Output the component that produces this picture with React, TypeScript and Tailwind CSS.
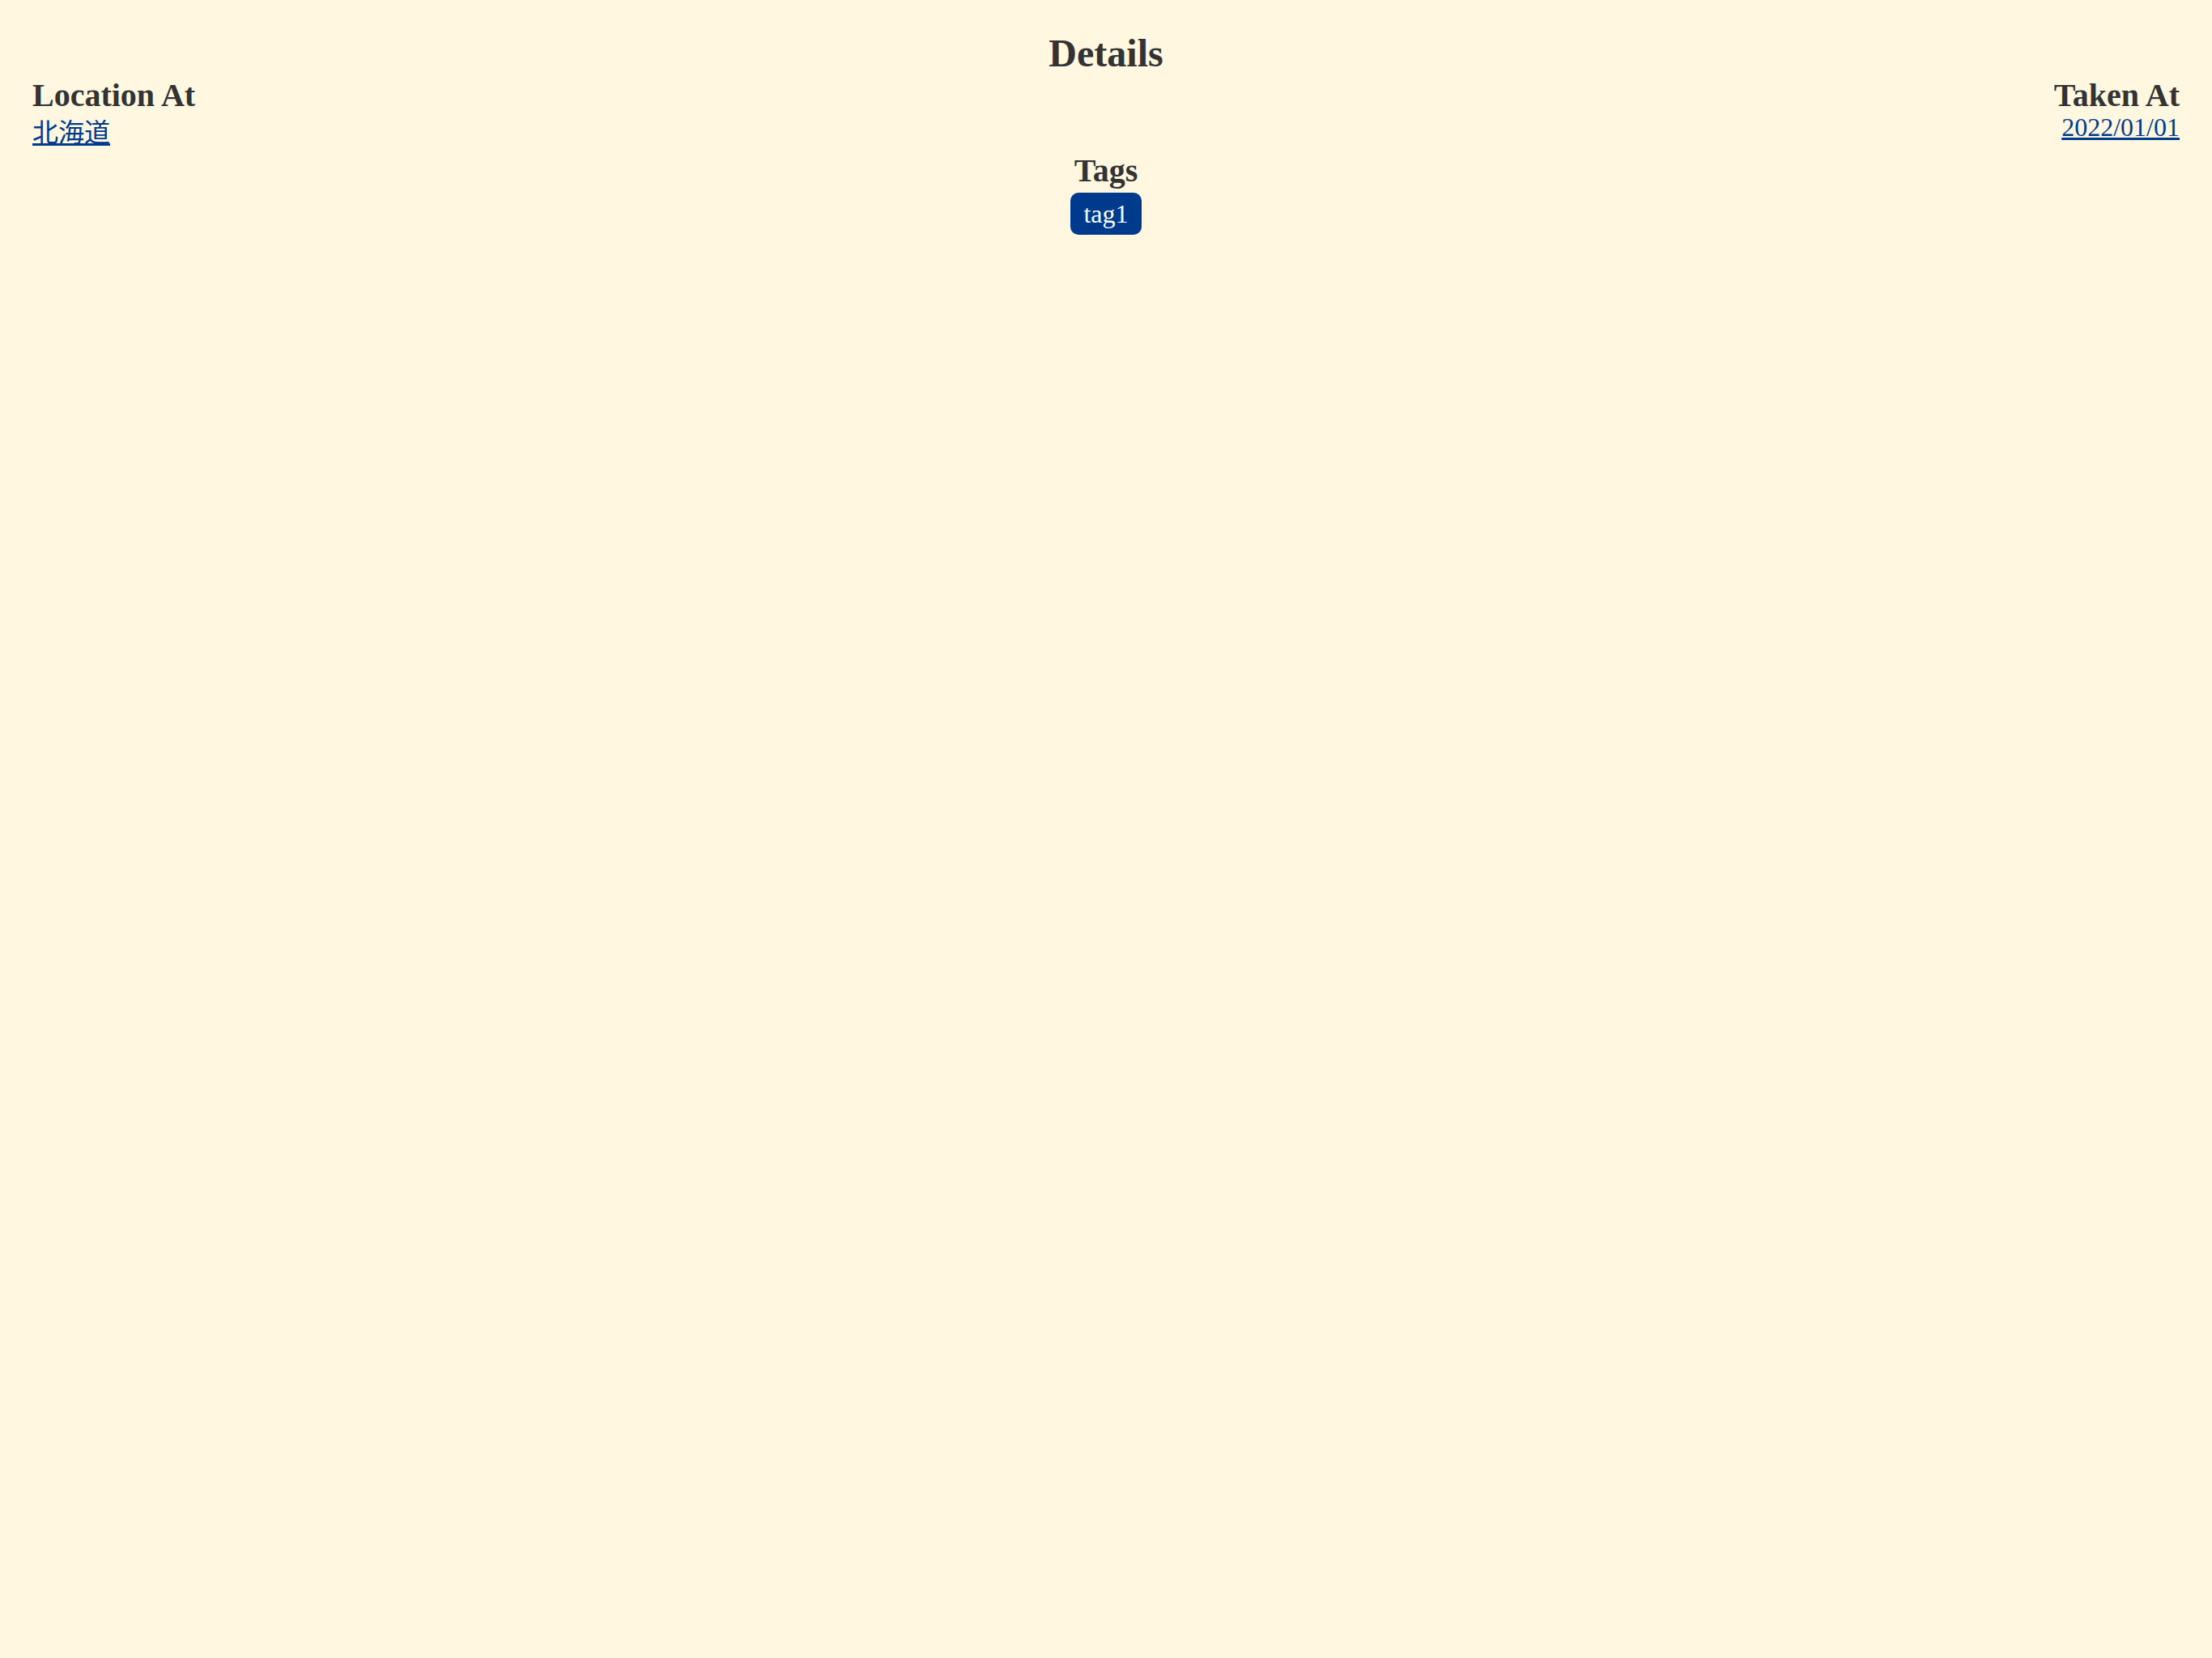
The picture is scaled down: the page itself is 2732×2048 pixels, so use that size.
export default function App() {
  return (
    <div
      className="min-h-screen w-full bg-[#fff7e0] px-[40px] pt-[39px] text-[#333333]"
      style={{ fontFamily: '"Liberation Serif", "Noto Sans CJK JP", serif' }}
    >
      <h2 className="text-center text-[48px] font-bold leading-[53px]">Details</h2>
      <div className="mt-[4px] flex justify-between">
        <div className="flex flex-col items-start">
          <h3 className="text-[40px] font-bold leading-[44px]">Location At</h3>
          <a href="#" className="text-[32px] leading-[48px] text-[#003a8c] underline">
            北海道
          </a>
        </div>
        <div className="flex flex-col items-end">
          <h3 className="text-[40px] font-bold leading-[44px]">Taken At</h3>
          <a href="#" className="text-[32px] leading-[35px] text-[#003a8c] underline">
            2022/01/01
          </a>
        </div>
      </div>
      <div className="mt-[1px] flex flex-col items-center">
        <h3 className="text-[40px] font-bold leading-[44px]">Tags</h3>
        <div className="mt-[5px] flex gap-2">
          <span className="rounded-[10px] bg-[#003a8c] px-4 py-2 text-[32px] leading-[36px] text-white">
            tag1
          </span>
        </div>
      </div>
    </div>
  );
}
